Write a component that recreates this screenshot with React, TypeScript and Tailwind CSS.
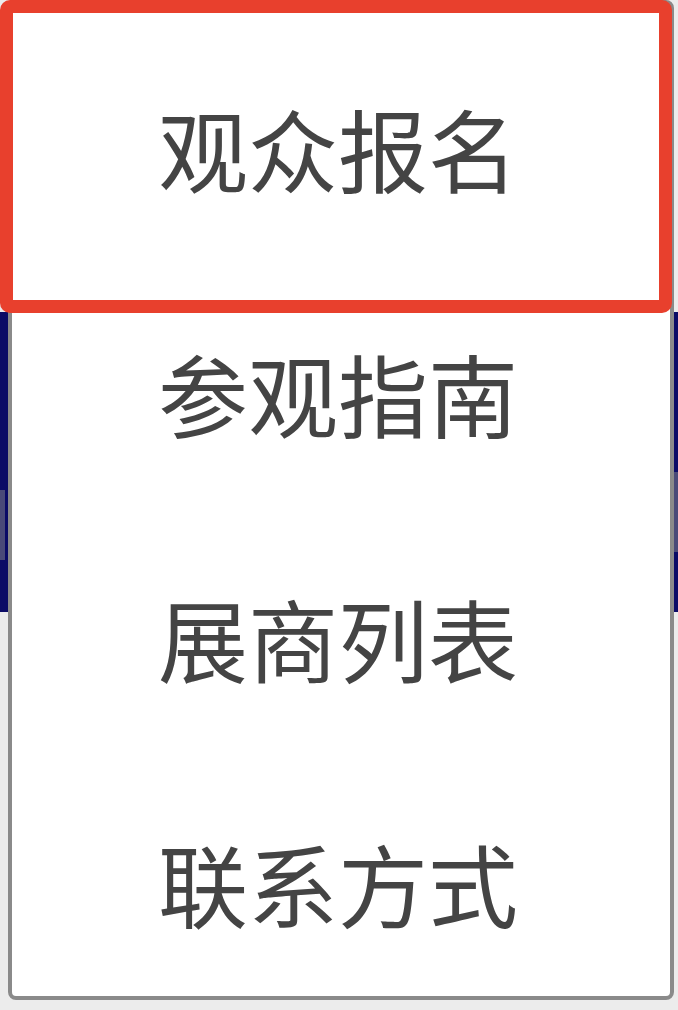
import * as React from "react";

const items = ["观众报名", "参观指南", "展商列表", "联系方式"];

export default function App() {
  return (
    <div
      className="relative h-[1010px] w-[678px] overflow-hidden bg-[#ececec]"
      style={{ fontFamily: '"Noto Sans CJK SC", "Noto Sans", sans-serif' }}
    >
      {/* nav bar sitting behind the open dropdown */}
      <div className="absolute left-0 right-0 top-[312px] h-[300px] bg-[#0b0b66]">
        <div className="absolute left-0 top-[178px] h-[70px] w-[5px] bg-[#4a4a78]" />
        <div className="absolute right-0 top-[160px] h-[80px] w-[4px] bg-[#4a4a78]" />
      </div>

      {/* dropdown panel */}
      <div className="absolute left-[8px] top-0 h-[1000px] w-[666px] overflow-hidden rounded-[8px] border-[4px] border-[#8a8a8a] bg-white">
        <ul className="flex flex-col pt-[20px]">
          {items.map((label) => (
            <li
              key={label}
              className="flex h-[245px] shrink-0 items-center justify-center text-[90px] font-normal leading-none text-[#444444]"
            >
              <span className="-translate-x-[3px]">{label}</span>
            </li>
          ))}
        </ul>
      </div>

      {/* focus ring on the active entry */}
      <div className="absolute left-0 top-0 h-[313px] w-[672px] rounded-[10px] border-[13px] border-[#e8402d]" />
    </div>
  );
}
